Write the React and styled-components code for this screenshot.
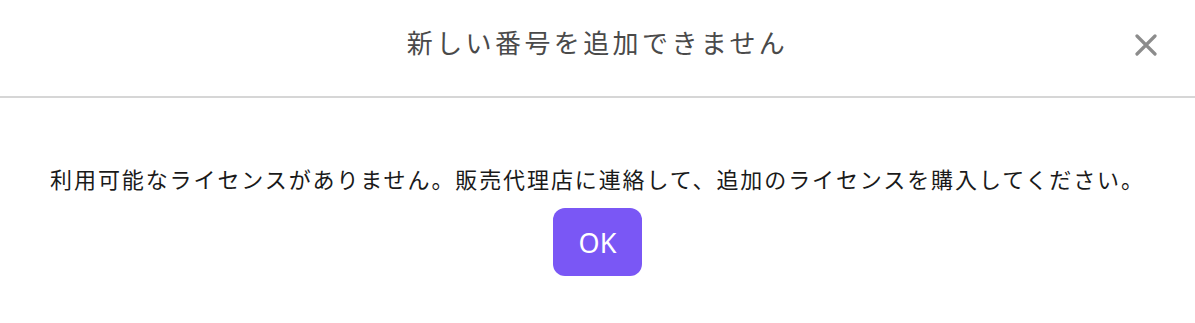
import styled, { createGlobalStyle } from "styled-components";

const GlobalStyle = createGlobalStyle`
  body {
    margin: 0;
    background: #ffffff;
    font-family: "Noto Sans CJK JP", "Noto Sans", sans-serif;
  }
`;

const Dialog = styled.div`
  width: 1195px;
  height: 323px;
  background: #ffffff;
  display: flex;
  flex-direction: column;
`;

const Header = styled.div`
  position: relative;
  height: 98px;
  border-bottom: 2px solid #d6d6d6;
  display: flex;
  justify-content: center;
  padding-top: 23px;
  box-sizing: border-box;
`;

const Title = styled.h2`
  margin: 0;
  font-size: 26px;
  line-height: 38px;
  font-weight: 400;
  letter-spacing: 3.4px;
  color: #4a4a4a;
`;

const CloseButton = styled.button`
  position: absolute;
  right: 36px;
  top: 32px;
  width: 26px;
  height: 26px;
  padding: 0;
  border: none;
  background: none;
  cursor: pointer;
  display: flex;
  align-items: center;
  justify-content: center;
`;

const Body = styled.div`
  display: flex;
  flex-direction: column;
  align-items: center;
  padding-top: 60px;
`;

const Message = styled.p`
  margin: 0;
  font-size: 22px;
  line-height: 40px;
  letter-spacing: 1.9px;
  color: #1a1a1a;
`;

const OkButton = styled.button`
  margin-top: 10px;
  width: 89px;
  height: 68px;
  border: none;
  border-radius: 12px;
  background: #7a57f5;
  color: #ffffff;
  font-family: "Noto Sans", "Noto Sans CJK JP", sans-serif;
  font-size: 27px;
  cursor: pointer;
`;

const App = () => (
  <>
    <GlobalStyle />
    <Dialog>
      <Header>
        <Title>新しい番号を追加できません</Title>
        <CloseButton aria-label="閉じる">
          <svg width="22" height="22" viewBox="0 0 22 22">
            <path
              d="M2 2 L20 20 M20 2 L2 20"
              stroke="#8c8c8c"
              strokeWidth="3.2"
              strokeLinecap="round"
            />
          </svg>
        </CloseButton>
      </Header>
      <Body>
        <Message>
          利用可能なライセンスがありません。販売代理店に連絡して、追加のライセンスを購入してください。
        </Message>
        <OkButton>OK</OkButton>
      </Body>
    </Dialog>
  </>
);

export default App;
